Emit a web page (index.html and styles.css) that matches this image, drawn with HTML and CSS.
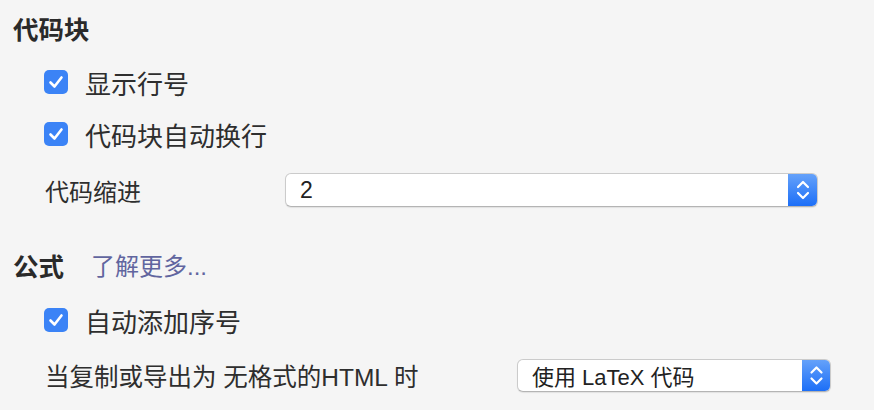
FILE: index.html
```html
<!DOCTYPE html>
<html lang="zh">
<head>
<meta charset="utf-8">
<link rel="stylesheet" href="styles.css">
</head>
<body>
<div class="page">
  <div class="heading h1">代码块</div>
  <div class="row check-row r1">
    <span class="checkbox"><svg viewBox="0 0 24 24" width="24" height="24"><path d="M6.5 12.5 L10.5 16.5 L17.5 7.5" fill="none" stroke="#fff" stroke-width="2.6" stroke-linecap="round" stroke-linejoin="round"/></svg></span>
    <span class="label">显示行号</span>
  </div>
  <div class="row check-row r2">
    <span class="checkbox"><svg viewBox="0 0 24 24" width="24" height="24"><path d="M6.5 12.5 L10.5 16.5 L17.5 7.5" fill="none" stroke="#fff" stroke-width="2.6" stroke-linecap="round" stroke-linejoin="round"/></svg></span>
    <span class="label">代码块自动换行</span>
  </div>
  <div class="row select-row r3">
    <span class="field-label w1">代码缩进</span>
    <div class="select s1">
      <span class="select-text">2</span>
      <span class="stepper"><svg viewBox="0 0 30 34" width="30" height="34"><path d="M10 14 L15 9 L20 14" fill="none" stroke="#fff" stroke-width="2.2" stroke-linecap="round" stroke-linejoin="round"/><path d="M10 20 L15 25 L20 20" fill="none" stroke="#fff" stroke-width="2.2" stroke-linecap="round" stroke-linejoin="round"/></svg></span>
    </div>
  </div>
  <div class="heading h2">公式<a class="link">了解更多...</a></div>
  <div class="row check-row r4">
    <span class="checkbox"><svg viewBox="0 0 24 24" width="24" height="24"><path d="M6.5 12.5 L10.5 16.5 L17.5 7.5" fill="none" stroke="#fff" stroke-width="2.6" stroke-linecap="round" stroke-linejoin="round"/></svg></span>
    <span class="label">自动添加序号</span>
  </div>
  <div class="row select-row r5">
    <span class="field-label w2">当复制或导出为 无格式的HTML 时</span>
    <div class="select s2">
      <span class="select-text t2">使用 LaTeX 代码</span>
      <span class="stepper"><svg viewBox="0 0 29 33" width="29" height="33"><path d="M9.5 13.5 L14.5 8.5 L19.5 13.5" fill="none" stroke="#fff" stroke-width="2.2" stroke-linecap="round" stroke-linejoin="round"/><path d="M9.5 19.5 L14.5 24.5 L19.5 19.5" fill="none" stroke="#fff" stroke-width="2.2" stroke-linecap="round" stroke-linejoin="round"/></svg></span>
    </div>
  </div>
</div>
</body>
</html>
```

FILE: styles.css
```css
html, body {
  margin: 0;
  padding: 0;
  background: #f5f5f5;
}
body {
  font-family: "Liberation Sans", "Noto Sans CJK SC", sans-serif;
  color: #2e2e2e;
}
.page {
  padding: 12px 0 0 13px;
  width: 861px;
  height: 398px;
  overflow: hidden;
}
.heading {
  height: 36px;
  line-height: 36px;
  font-size: 25.5px;
  font-weight: 600;
  color: #2a2a2a;
  display: flex;
  align-items: center;
}
.link {
  margin-left: 27px;
  font-weight: normal;
  font-size: 24px;
  color: #61659f;
}
.row {
  display: flex;
  align-items: center;
  height: 36px;
  font-size: 26px;
}
.check-row {
  padding-left: 31px;
}
.checkbox {
  width: 24px;
  height: 24px;
  border-radius: 5px;
  background: #3b83f6;
  display: flex;
  flex: none;
}
.label {
  margin-left: 17px;
}
.select-row {
  padding-left: 32px;
  font-size: 24px;
}
.r1 { margin-top: 16px; }
.r2 { margin-top: 16px; }
.r3 { margin-top: 20px; }
.h2 { margin-top: 41px; }
.r4 { margin-top: 17px; }
.r5 { margin-top: 19px; font-size: 24.5px; }
.field-label {
  flex: none;
}
.w1 { width: 240px; }
.w2 { width: 472px; }
.select {
  display: flex;
  align-items: center;
  background: #fff;
  border: 1px solid #cbcbcb;
  border-bottom-color: #b4b4b4;
  border-radius: 6px;
  box-shadow: 0 1px 1px rgba(0, 0, 0, 0.08);
  box-sizing: border-box;
  overflow: hidden;
}
.s1 { width: 533px; height: 34px; }
.s2 { width: 314px; height: 33px; }
.select-text {
  flex: 1;
  padding-left: 14px;
  font-size: 23px;
  color: #222;
}
.t2 { font-size: 22px; }
.stepper {
  display: flex;
  align-self: stretch;
  background: linear-gradient(#67a3fa, #1a6df7);
  margin: -1px -1px -1px 0;
}
```
